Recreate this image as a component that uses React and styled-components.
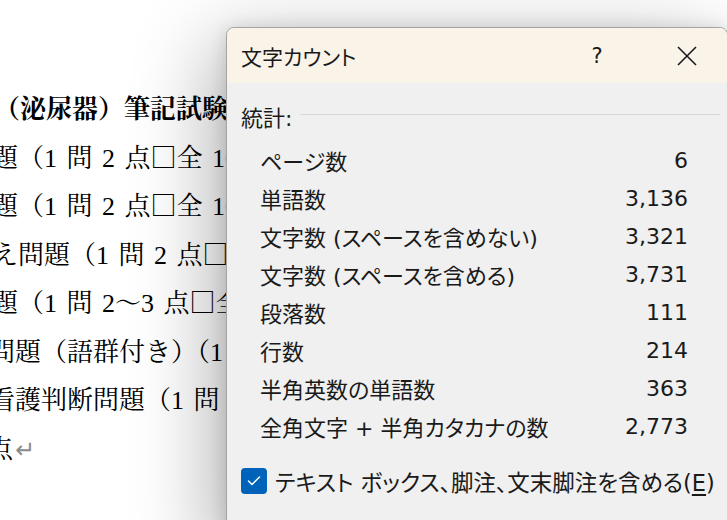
import React from "react";
import styled, { createGlobalStyle } from "styled-components";

const GlobalStyle = createGlobalStyle`
  html, body { margin: 0; padding: 0; background: #ffffff; overflow: hidden; }
`;

const Page = styled.div`
  position: relative;
  width: 727px;
  height: 520px;
  overflow: hidden;
  background: #ffffff;
`;

const Document = styled.div`
  width: 226px;
  overflow: hidden;
  padding-top: 86px;
  font-family: "Liberation Serif", "Noto Serif CJK JP", "Noto Sans CJK JP", serif;
  font-size: 26px;
  line-height: 48.5px;
  word-spacing: 3px;
  color: #000000;
  white-space: nowrap;
`;

const DocLine = styled.div`
  height: 48.5px;
  margin-left: ${(p) => p.$shift}px;
  font-weight: ${(p) => (p.$bold ? 700 : 400)};
`;

const Box = styled.span`
  font-family: "Noto Serif CJK JP", "Noto Sans CJK JP", serif;
  line-height: 1;
`;

const ReturnMark = styled.span`
  color: #8c8c8c;
  font-family: "DejaVu Sans", sans-serif;
  font-size: 24px;
  line-height: 1;
  margin-left: 2px;
`;

const Dialog = styled.div`
  position: absolute;
  left: 226px;
  top: 27px;
  width: 502px;
  height: 520px;
  box-sizing: border-box;
  border: 1px solid #a4a4a4;
  border-radius: 8px;
  overflow: hidden;
  background: #f0f0f0;
  box-shadow: -14px 16px 80px rgba(0, 0, 0, 0.3), 0 2px 18px rgba(0, 0, 0, 0.14);
  font-family: "DejaVu Sans", "Noto Sans CJK JP", sans-serif;
  color: #1a1a1a;
  display: flex;
  flex-direction: column;
`;

const TitleBar = styled.div`
  display: flex;
  align-items: center;
  height: 55px;
  flex: none;
  background: #f9f3e8;
  padding: 0 10px 0 14px;
`;

const Title = styled.div`
  flex: 1;
  font-size: 21px;
  font-feature-settings: "palt";
  color: #1a1a1a;
`;

const TitleButton = styled.div`
  width: 60px;
  height: 100%;
  display: flex;
  align-items: center;
  justify-content: center;
  margin-left: ${(p) => p.$gap || 0}px;
  font-size: 21px;
  color: #1a1a1a;
`;

const Body = styled.div`
  flex: 1;
  padding: 14px 7px 0 14px;
`;

const SectionHeader = styled.div`
  display: flex;
  align-items: center;
  height: 38px;
`;

const SectionTitle = styled.div`
  font-size: 22px;
  font-feature-settings: "palt";
`;

const Rule = styled.div`
  flex: 1;
  height: 1px;
  background: #d9d9d9;
  margin-left: 8px;
  margin-top: -3px;
`;

const Stats = styled.div`
  margin-top: 6px;
  padding: 0 32px 0 19px;
`;

const StatRow = styled.div`
  display: flex;
  align-items: center;
  justify-content: space-between;
  height: 38px;
`;

const StatLabel = styled.div`
  font-size: 22px;
  font-feature-settings: "palt";
  white-space: nowrap;
`;

const StatValue = styled.div`
  font-size: 22px;
  font-family: "DejaVu Sans", sans-serif;
`;

const CheckRow = styled.label`
  margin-top: 20px;
  display: flex;
  align-items: center;
  gap: 8px;
`;

const CheckBox = styled.span`
  width: 26px;
  height: 26px;
  flex: none;
  border-radius: 4px;
  background: #0063b9;
  display: flex;
  align-items: center;
  justify-content: center;
`;

const CheckLabel = styled.span`
  font-size: 22.5px;
  font-feature-settings: "palt";
  white-space: nowrap;
`;

const AccessKey = styled.span`
  text-decoration: underline;
  text-underline-offset: 3px;
`;

const stats = [
  ["ページ数", "6"],
  ["単語数", "3,136"],
  ["文字数 (スペースを含めない)", "3,321"],
  ["文字数 (スペースを含める)", "3,731"],
  ["段落数", "111"],
  ["行数", "214"],
  ["半角英数の単語数", "363"],
  ["全角文字 + 半角カタカナの数", "2,773"],
];

export default function App() {
  return (
    <Page>
      <GlobalStyle />
      <Document>
        <DocLine $shift={-6} $bold>（泌尿器）筆記試験</DocLine>
        <DocLine $shift={-8}>題（1 問 2 点<Box>□</Box>全 10 問）</DocLine>
        <DocLine $shift={-8}>題（1 問 2 点<Box>□</Box>全 10 問）</DocLine>
        <DocLine $shift={-8}>え問題（1 問 2 点<Box>□</Box>全 5 問）</DocLine>
        <DocLine $shift={-8}>題（1 問 2～3 点<Box>□</Box>全 5 問）</DocLine>
        <DocLine $shift={-11}>問題（語群付き）（1 問 2 点）</DocLine>
        <DocLine $shift={-11}>看護判断問題（1 問 5 点）</DocLine>
        <DocLine $shift={-13}>
          点<ReturnMark>↵</ReturnMark>
        </DocLine>
      </Document>

      <Dialog>
        <TitleBar>
          <Title>文字カウント</Title>
          <TitleButton>?</TitleButton>
          <TitleButton $gap={30}>
            <svg width="20" height="20" viewBox="0 0 20 20">
              <path d="M1 1 L19 19 M19 1 L1 19" stroke="#1a1a1a" strokeWidth="1.6" fill="none" />
            </svg>
          </TitleButton>
        </TitleBar>
        <Body>
          <SectionHeader>
            <SectionTitle>統計:</SectionTitle>
            <Rule />
          </SectionHeader>
          <Stats>
            {stats.map(([label, value]) => (
              <StatRow key={label}>
                <StatLabel>{label}</StatLabel>
                <StatValue>{value}</StatValue>
              </StatRow>
            ))}
          </Stats>
          <CheckRow>
            <CheckBox>
              <svg width="26" height="26" viewBox="0 0 26 26">
                <path d="M7.5 13 L11 16.5 L18.5 9" stroke="#ffffff" strokeWidth="1.5" fill="none" strokeLinecap="round" strokeLinejoin="round" />
              </svg>
            </CheckBox>
            <CheckLabel>
              テキスト ボックス、脚注、文末脚注を含める(<AccessKey>E</AccessKey>)
            </CheckLabel>
          </CheckRow>
        </Body>
      </Dialog>
    </Page>
  );
}
